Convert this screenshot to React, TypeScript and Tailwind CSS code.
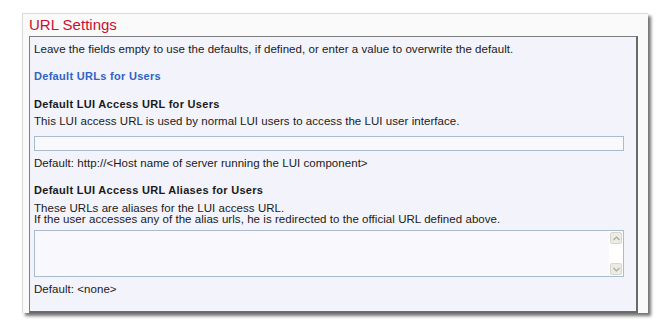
import type { ReactNode } from "react";

const font = { fontFamily: '"Liberation Sans", Arial, sans-serif' };

function Label({ children }: { children: ReactNode }) {
  return (
    <div className="text-[11px] font-bold leading-[13px] tracking-[0.3px] text-[#1a1a1a]">
      {children}
    </div>
  );
}

function ScrollButton({ up }: { up: boolean }) {
  return (
    <div className="flex h-[12px] w-[12px] items-center justify-center rounded-[2px] border border-[#d6d6cc] bg-[#ecece4]">
      <svg width="7" height="5" viewBox="0 0 7 5" fill="none" stroke="#a8a8a0" strokeWidth={1.2}>
        {up ? <path d="M0.5 4L3.5 1L6.5 4" /> : <path d="M0.5 1L3.5 4L6.5 1" />}
      </svg>
    </div>
  );
}

export default function App() {
  return (
    <div className="h-[331px] w-[672px] bg-white pl-[22px] pt-[13px]" style={font}>
      <div className="flex h-[300px] w-[626px] flex-col border-l border-t border-[#dadada] bg-[#fafafa] shadow-[3px_3px_3px_rgba(0,0,0,0.55)]">
        <div className="flex h-[20px] items-center pl-[6px] text-[15px] leading-none text-[#c8102e]">
          URL Settings
        </div>
        <div className="ml-[6px] mt-[2px] w-[609px] flex-1 border border-b-2 border-r-2 border-[#7c7c7c] border-b-[#6a6a6a] border-r-[#6a6a6a] bg-[#f3f3fb] pl-[4px] text-[11.5px] tracking-[0.05px] text-[#1a1a1a]">
          <div className="mt-[6px] leading-[13px]">
            Leave the fields empty to use the defaults, if defined, or enter a value to overwrite the default.
          </div>
          <div className="mt-[14px] text-[11px] font-bold leading-[13px] tracking-[0.3px] text-[#2f63c4]">
            Default URLs for Users
          </div>
          <div className="mt-[15px]">
            <Label>Default LUI Access URL for Users</Label>
          </div>
          <div className="mt-[4px] leading-[13px]">
            This LUI access URL is used by normal LUI users to access the LUI user interface.
          </div>
          <div className="mt-[8px] h-[15px] w-[590px] border border-[#a9bccf] bg-[#f9f9fd]" />
          <div className="mt-[6px] leading-[13px]">
            Default: http://&lt;Host name of server running the LUI component&gt;
          </div>
          <div className="mt-[14px]">
            <Label>Default LUI Access URL Aliases for Users</Label>
          </div>
          <div className="mt-[6px] leading-[11px]">
            <div>These URLs are aliases for the LUI access URL.</div>
            <div>If the user accesses any of the alias urls, he is redirected to the official URL defined above.</div>
          </div>
          <div className="mt-[5px] flex h-[47px] w-[590px] border border-[#a9bccf] bg-[#f9f9fd]">
            <div className="flex-1" />
            <div className="flex w-[14px] flex-col items-center justify-between bg-white py-[1px]">
              <ScrollButton up />
              <ScrollButton up={false} />
            </div>
          </div>
          <div className="mt-[6px] leading-[13px]">Default: &lt;none&gt;</div>
        </div>
      </div>
    </div>
  );
}
